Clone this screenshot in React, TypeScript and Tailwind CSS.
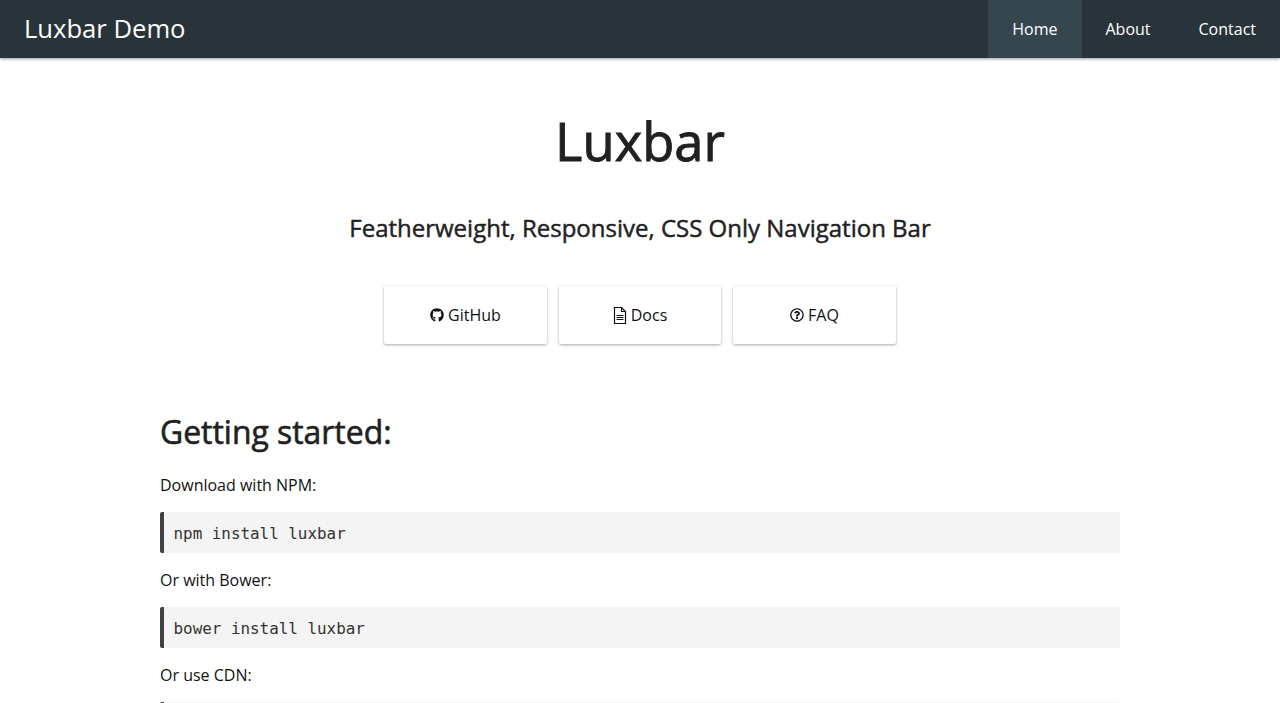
import { FaGithub, FaRegQuestionCircle } from "react-icons/fa";

function DocIcon() {
  return (
    <svg width="14" height="17" viewBox="0 0 14 17" fill="none" stroke="currentColor" strokeWidth="1.2">
      <path d="M1.5 .5h7l4 4v12h-11z" />
      <path d="M8.5 .5v4h4" />
      <path d="M3.5 8.5h7M3.5 10.5h7M3.5 12.5h7" />
    </svg>
  );
}

function LinkButton({ icon, label, width }: { icon: React.ReactNode; label: string; width: string }) {
  return (
    <a className={`${width} h-[58px] flex items-center justify-center gap-1 bg-white rounded-[2px] shadow-[0_1px_3px_rgba(0,0,0,0.35)] text-[16px] text-[#111]`}>
      {icon}
      <span>{label}</span>
    </a>
  );
}

function CodeBlock({ children }: { children?: string }) {
  return (
    <pre className="h-[41px] mt-[16px] pt-[2px] flex items-center pl-[9.5px] bg-[#f4f4f4] border-l-4 border-[#424242] rounded-[2px] text-[15.9px] text-[#333] font-['DejaVu_Sans_Mono',monospace]">
      {children}
    </pre>
  );
}

export default function App() {
  return (
    <div className="h-[703px] overflow-hidden bg-white font-['Open_Sans',sans-serif] text-[#111]">
      <header className="h-[58px] flex justify-between bg-[#29343a] shadow-[0_1px_3px_rgba(0,0,0,0.4)] text-white">
        <div className="pl-6 flex items-center text-[25.6px]">Luxbar Demo</div>
        <nav className="flex text-[16px]">
          <a className="pl-6 pr-[25px] flex items-center bg-[#36464e]">Home</a>
          <a className="pl-[23px] pr-6 flex items-center">About</a>
          <a className="px-6 flex items-center">Contact</a>
        </nav>
      </header>

      <main className="w-[960px] mx-auto">
        <h1 className="mt-[45px] text-center text-[#212121] text-[52.5px] leading-[76px] [-webkit-text-stroke:0.9px_#212121]">Luxbar</h1>
        <h2 className="mt-[32px] text-center text-[#212121] text-[24px] leading-[33px] [-webkit-text-stroke:0.45px_#212121]">
          Featherweight, Responsive, CSS Only Navigation Bar
        </h2>
        <div className="mt-[42px] flex justify-center gap-3">
          <LinkButton icon={<FaGithub size={14} />} label="GitHub" width="w-[163px]" />
          <LinkButton icon={<DocIcon />} label="Docs" width="w-[162px]" />
          <LinkButton icon={<FaRegQuestionCircle size={14} />} label="FAQ" width="w-[163px]" />
        </div>

        <h3 className="mt-[66px] text-[#212121] text-[31.9px] leading-[44px] [-webkit-text-stroke:0.6px_#212121]">Getting started:</h3>
        <p className="mt-[20px] text-[16px] leading-[22px]">Download with NPM:</p>
        <CodeBlock>npm install luxbar</CodeBlock>
        <p className="mt-[16px] text-[16px] leading-[22px]">Or with Bower:</p>
        <CodeBlock>bower install luxbar</CodeBlock>
        <p className="mt-[16px] text-[16px] leading-[22px]">Or use CDN:</p>
        <CodeBlock />
      </main>
    </div>
  );
}
